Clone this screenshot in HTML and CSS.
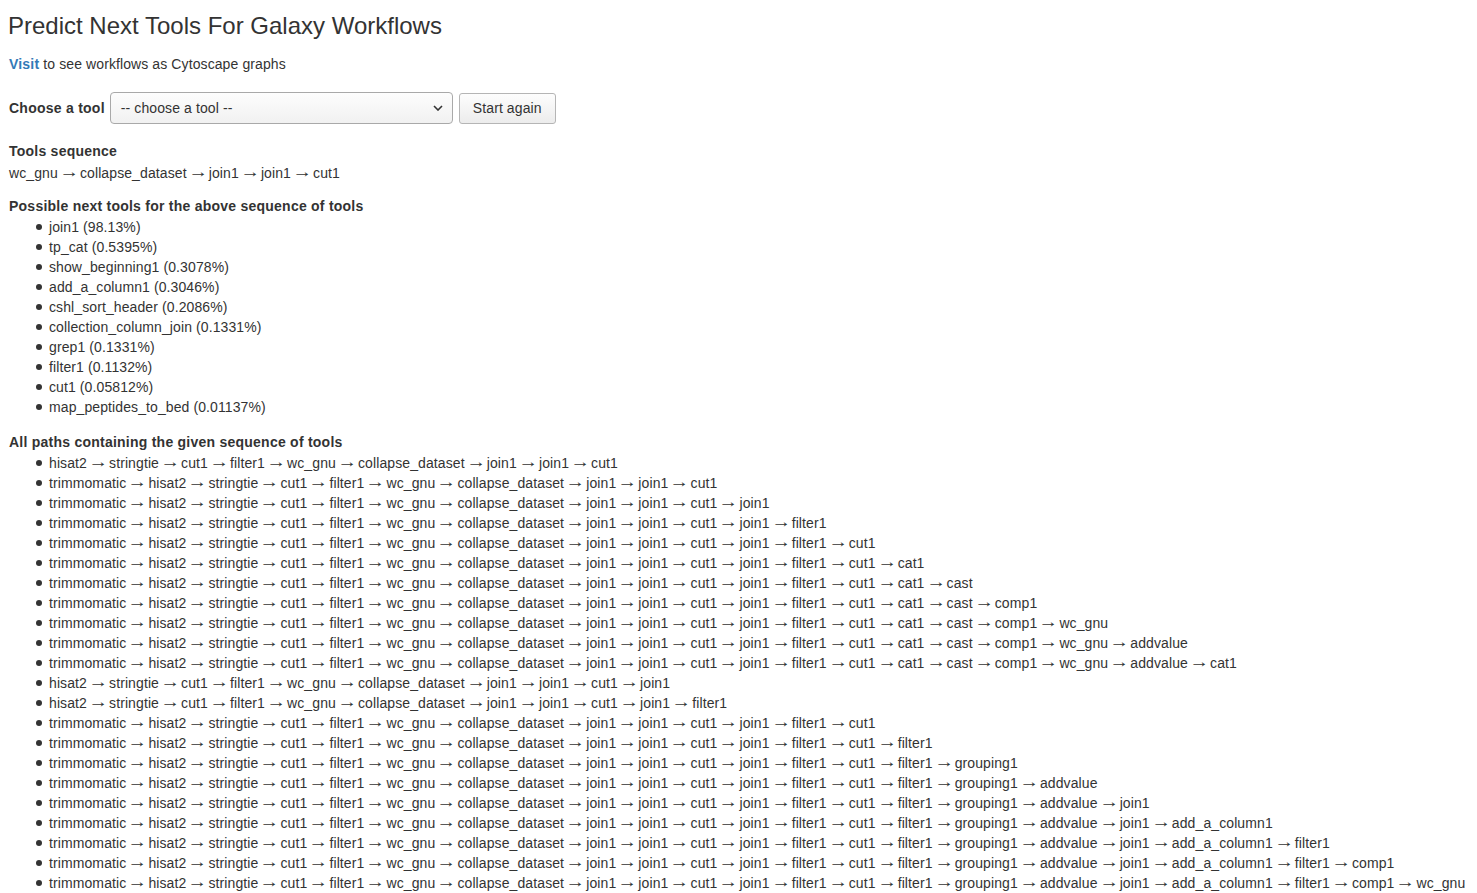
FILE: index.html
```html
<!DOCTYPE html>
<html>
<head>
<meta charset="utf-8">
<title>Predict Next Tools For Galaxy Workflows</title>
<link rel="stylesheet" href="styles.css">
</head>
<body>
<div class="page">
  <h1 class="title">Predict Next Tools For Galaxy Workflows</h1>
  <p class="intro"><a class="link" href="#">Visit</a> to see workflows as Cytoscape graphs</p>
  <div class="chooser">
    <label class="chooser-label">Choose a tool</label>
    <div class="select">
      <span class="select-text">-- choose a tool --</span>
      <svg class="select-caret" width="10" height="6" viewBox="0 0 10 6"><path d="M1 1 L5 5 L9 1" fill="none" stroke="#333" stroke-width="1.6"/></svg>
    </div>
    <button class="btn">Start again</button>
  </div>

  <div class="section section-seq">
    <div class="heading">Tools sequence</div>
    <div class="line">wc_gnu <span class="ar">→</span> collapse_dataset <span class="ar">→</span> join1 <span class="ar">→</span> join1 <span class="ar">→</span> cut1</div>
  </div>

  <div class="section">
    <div class="heading heading-list">Possible next tools for the above sequence of tools</div>
    <ul class="list">
      <li>join1 (98.13%)</li>
      <li>tp_cat (0.5395%)</li>
      <li>show_beginning1 (0.3078%)</li>
      <li>add_a_column1 (0.3046%)</li>
      <li>cshl_sort_header (0.2086%)</li>
      <li>collection_column_join (0.1331%)</li>
      <li>grep1 (0.1331%)</li>
      <li>filter1 (0.1132%)</li>
      <li>cut1 (0.05812%)</li>
      <li>map_peptides_to_bed (0.01137%)</li>
    </ul>
  </div>

  <div class="section">
    <div class="heading heading-list">All paths containing the given sequence of tools</div>
    <ul class="list">
      <li>hisat2 <span class="ar">→</span> stringtie <span class="ar">→</span> cut1 <span class="ar">→</span> filter1 <span class="ar">→</span> wc_gnu <span class="ar">→</span> collapse_dataset <span class="ar">→</span> join1 <span class="ar">→</span> join1 <span class="ar">→</span> cut1</li>
      <li>trimmomatic <span class="ar">→</span> hisat2 <span class="ar">→</span> stringtie <span class="ar">→</span> cut1 <span class="ar">→</span> filter1 <span class="ar">→</span> wc_gnu <span class="ar">→</span> collapse_dataset <span class="ar">→</span> join1 <span class="ar">→</span> join1 <span class="ar">→</span> cut1</li>
      <li>trimmomatic <span class="ar">→</span> hisat2 <span class="ar">→</span> stringtie <span class="ar">→</span> cut1 <span class="ar">→</span> filter1 <span class="ar">→</span> wc_gnu <span class="ar">→</span> collapse_dataset <span class="ar">→</span> join1 <span class="ar">→</span> join1 <span class="ar">→</span> cut1 <span class="ar">→</span> join1</li>
      <li>trimmomatic <span class="ar">→</span> hisat2 <span class="ar">→</span> stringtie <span class="ar">→</span> cut1 <span class="ar">→</span> filter1 <span class="ar">→</span> wc_gnu <span class="ar">→</span> collapse_dataset <span class="ar">→</span> join1 <span class="ar">→</span> join1 <span class="ar">→</span> cut1 <span class="ar">→</span> join1 <span class="ar">→</span> filter1</li>
      <li>trimmomatic <span class="ar">→</span> hisat2 <span class="ar">→</span> stringtie <span class="ar">→</span> cut1 <span class="ar">→</span> filter1 <span class="ar">→</span> wc_gnu <span class="ar">→</span> collapse_dataset <span class="ar">→</span> join1 <span class="ar">→</span> join1 <span class="ar">→</span> cut1 <span class="ar">→</span> join1 <span class="ar">→</span> filter1 <span class="ar">→</span> cut1</li>
      <li>trimmomatic <span class="ar">→</span> hisat2 <span class="ar">→</span> stringtie <span class="ar">→</span> cut1 <span class="ar">→</span> filter1 <span class="ar">→</span> wc_gnu <span class="ar">→</span> collapse_dataset <span class="ar">→</span> join1 <span class="ar">→</span> join1 <span class="ar">→</span> cut1 <span class="ar">→</span> join1 <span class="ar">→</span> filter1 <span class="ar">→</span> cut1 <span class="ar">→</span> cat1</li>
      <li>trimmomatic <span class="ar">→</span> hisat2 <span class="ar">→</span> stringtie <span class="ar">→</span> cut1 <span class="ar">→</span> filter1 <span class="ar">→</span> wc_gnu <span class="ar">→</span> collapse_dataset <span class="ar">→</span> join1 <span class="ar">→</span> join1 <span class="ar">→</span> cut1 <span class="ar">→</span> join1 <span class="ar">→</span> filter1 <span class="ar">→</span> cut1 <span class="ar">→</span> cat1 <span class="ar">→</span> cast</li>
      <li>trimmomatic <span class="ar">→</span> hisat2 <span class="ar">→</span> stringtie <span class="ar">→</span> cut1 <span class="ar">→</span> filter1 <span class="ar">→</span> wc_gnu <span class="ar">→</span> collapse_dataset <span class="ar">→</span> join1 <span class="ar">→</span> join1 <span class="ar">→</span> cut1 <span class="ar">→</span> join1 <span class="ar">→</span> filter1 <span class="ar">→</span> cut1 <span class="ar">→</span> cat1 <span class="ar">→</span> cast <span class="ar">→</span> comp1</li>
      <li>trimmomatic <span class="ar">→</span> hisat2 <span class="ar">→</span> stringtie <span class="ar">→</span> cut1 <span class="ar">→</span> filter1 <span class="ar">→</span> wc_gnu <span class="ar">→</span> collapse_dataset <span class="ar">→</span> join1 <span class="ar">→</span> join1 <span class="ar">→</span> cut1 <span class="ar">→</span> join1 <span class="ar">→</span> filter1 <span class="ar">→</span> cut1 <span class="ar">→</span> cat1 <span class="ar">→</span> cast <span class="ar">→</span> comp1 <span class="ar">→</span> wc_gnu</li>
      <li>trimmomatic <span class="ar">→</span> hisat2 <span class="ar">→</span> stringtie <span class="ar">→</span> cut1 <span class="ar">→</span> filter1 <span class="ar">→</span> wc_gnu <span class="ar">→</span> collapse_dataset <span class="ar">→</span> join1 <span class="ar">→</span> join1 <span class="ar">→</span> cut1 <span class="ar">→</span> join1 <span class="ar">→</span> filter1 <span class="ar">→</span> cut1 <span class="ar">→</span> cat1 <span class="ar">→</span> cast <span class="ar">→</span> comp1 <span class="ar">→</span> wc_gnu <span class="ar">→</span> addvalue</li>
      <li>trimmomatic <span class="ar">→</span> hisat2 <span class="ar">→</span> stringtie <span class="ar">→</span> cut1 <span class="ar">→</span> filter1 <span class="ar">→</span> wc_gnu <span class="ar">→</span> collapse_dataset <span class="ar">→</span> join1 <span class="ar">→</span> join1 <span class="ar">→</span> cut1 <span class="ar">→</span> join1 <span class="ar">→</span> filter1 <span class="ar">→</span> cut1 <span class="ar">→</span> cat1 <span class="ar">→</span> cast <span class="ar">→</span> comp1 <span class="ar">→</span> wc_gnu <span class="ar">→</span> addvalue <span class="ar">→</span> cat1</li>
      <li>hisat2 <span class="ar">→</span> stringtie <span class="ar">→</span> cut1 <span class="ar">→</span> filter1 <span class="ar">→</span> wc_gnu <span class="ar">→</span> collapse_dataset <span class="ar">→</span> join1 <span class="ar">→</span> join1 <span class="ar">→</span> cut1 <span class="ar">→</span> join1</li>
      <li>hisat2 <span class="ar">→</span> stringtie <span class="ar">→</span> cut1 <span class="ar">→</span> filter1 <span class="ar">→</span> wc_gnu <span class="ar">→</span> collapse_dataset <span class="ar">→</span> join1 <span class="ar">→</span> join1 <span class="ar">→</span> cut1 <span class="ar">→</span> join1 <span class="ar">→</span> filter1</li>
      <li>trimmomatic <span class="ar">→</span> hisat2 <span class="ar">→</span> stringtie <span class="ar">→</span> cut1 <span class="ar">→</span> filter1 <span class="ar">→</span> wc_gnu <span class="ar">→</span> collapse_dataset <span class="ar">→</span> join1 <span class="ar">→</span> join1 <span class="ar">→</span> cut1 <span class="ar">→</span> join1 <span class="ar">→</span> filter1 <span class="ar">→</span> cut1</li>
      <li>trimmomatic <span class="ar">→</span> hisat2 <span class="ar">→</span> stringtie <span class="ar">→</span> cut1 <span class="ar">→</span> filter1 <span class="ar">→</span> wc_gnu <span class="ar">→</span> collapse_dataset <span class="ar">→</span> join1 <span class="ar">→</span> join1 <span class="ar">→</span> cut1 <span class="ar">→</span> join1 <span class="ar">→</span> filter1 <span class="ar">→</span> cut1 <span class="ar">→</span> filter1</li>
      <li>trimmomatic <span class="ar">→</span> hisat2 <span class="ar">→</span> stringtie <span class="ar">→</span> cut1 <span class="ar">→</span> filter1 <span class="ar">→</span> wc_gnu <span class="ar">→</span> collapse_dataset <span class="ar">→</span> join1 <span class="ar">→</span> join1 <span class="ar">→</span> cut1 <span class="ar">→</span> join1 <span class="ar">→</span> filter1 <span class="ar">→</span> cut1 <span class="ar">→</span> filter1 <span class="ar">→</span> grouping1</li>
      <li>trimmomatic <span class="ar">→</span> hisat2 <span class="ar">→</span> stringtie <span class="ar">→</span> cut1 <span class="ar">→</span> filter1 <span class="ar">→</span> wc_gnu <span class="ar">→</span> collapse_dataset <span class="ar">→</span> join1 <span class="ar">→</span> join1 <span class="ar">→</span> cut1 <span class="ar">→</span> join1 <span class="ar">→</span> filter1 <span class="ar">→</span> cut1 <span class="ar">→</span> filter1 <span class="ar">→</span> grouping1 <span class="ar">→</span> addvalue</li>
      <li>trimmomatic <span class="ar">→</span> hisat2 <span class="ar">→</span> stringtie <span class="ar">→</span> cut1 <span class="ar">→</span> filter1 <span class="ar">→</span> wc_gnu <span class="ar">→</span> collapse_dataset <span class="ar">→</span> join1 <span class="ar">→</span> join1 <span class="ar">→</span> cut1 <span class="ar">→</span> join1 <span class="ar">→</span> filter1 <span class="ar">→</span> cut1 <span class="ar">→</span> filter1 <span class="ar">→</span> grouping1 <span class="ar">→</span> addvalue <span class="ar">→</span> join1</li>
      <li>trimmomatic <span class="ar">→</span> hisat2 <span class="ar">→</span> stringtie <span class="ar">→</span> cut1 <span class="ar">→</span> filter1 <span class="ar">→</span> wc_gnu <span class="ar">→</span> collapse_dataset <span class="ar">→</span> join1 <span class="ar">→</span> join1 <span class="ar">→</span> cut1 <span class="ar">→</span> join1 <span class="ar">→</span> filter1 <span class="ar">→</span> cut1 <span class="ar">→</span> filter1 <span class="ar">→</span> grouping1 <span class="ar">→</span> addvalue <span class="ar">→</span> join1 <span class="ar">→</span> add_a_column1</li>
      <li>trimmomatic <span class="ar">→</span> hisat2 <span class="ar">→</span> stringtie <span class="ar">→</span> cut1 <span class="ar">→</span> filter1 <span class="ar">→</span> wc_gnu <span class="ar">→</span> collapse_dataset <span class="ar">→</span> join1 <span class="ar">→</span> join1 <span class="ar">→</span> cut1 <span class="ar">→</span> join1 <span class="ar">→</span> filter1 <span class="ar">→</span> cut1 <span class="ar">→</span> filter1 <span class="ar">→</span> grouping1 <span class="ar">→</span> addvalue <span class="ar">→</span> join1 <span class="ar">→</span> add_a_column1 <span class="ar">→</span> filter1</li>
      <li>trimmomatic <span class="ar">→</span> hisat2 <span class="ar">→</span> stringtie <span class="ar">→</span> cut1 <span class="ar">→</span> filter1 <span class="ar">→</span> wc_gnu <span class="ar">→</span> collapse_dataset <span class="ar">→</span> join1 <span class="ar">→</span> join1 <span class="ar">→</span> cut1 <span class="ar">→</span> join1 <span class="ar">→</span> filter1 <span class="ar">→</span> cut1 <span class="ar">→</span> filter1 <span class="ar">→</span> grouping1 <span class="ar">→</span> addvalue <span class="ar">→</span> join1 <span class="ar">→</span> add_a_column1 <span class="ar">→</span> filter1 <span class="ar">→</span> comp1</li>
      <li>trimmomatic <span class="ar">→</span> hisat2 <span class="ar">→</span> stringtie <span class="ar">→</span> cut1 <span class="ar">→</span> filter1 <span class="ar">→</span> wc_gnu <span class="ar">→</span> collapse_dataset <span class="ar">→</span> join1 <span class="ar">→</span> join1 <span class="ar">→</span> cut1 <span class="ar">→</span> join1 <span class="ar">→</span> filter1 <span class="ar">→</span> cut1 <span class="ar">→</span> filter1 <span class="ar">→</span> grouping1 <span class="ar">→</span> addvalue <span class="ar">→</span> join1 <span class="ar">→</span> add_a_column1 <span class="ar">→</span> filter1 <span class="ar">→</span> comp1 <span class="ar">→</span> wc_gnu</li>
    </ul>
  </div>
</div>
</body>
</html>
```
FILE: styles.css
```css
* { box-sizing: border-box; }
html, body { margin: 0; padding: 0; background: #fff; }
body {
  font-family: "Liberation Sans", Arial, sans-serif;
  font-size: 14px;
  line-height: 20px;
  color: #333;
  letter-spacing: 0.1px;
}
.page { padding: 0 9px; }
.title {
  font-size: 24px;
  font-weight: 500;
  line-height: 26px;
  letter-spacing: 0;
  margin: 13px 0 0 -1px;
}
.intro { margin: 15px 0 18px; }
.link { color: #337ab7; font-weight: bold; text-decoration: none; letter-spacing: 0.2px; }
.chooser {
  display: flex;
  align-items: center;
  margin-bottom: 17px;
}
.chooser-label { font-weight: bold; letter-spacing: 0.25px; margin-right: 5px; }
.select {
  width: 343px;
  height: 32px;
  border: 1px solid #a9a9a9;
  border-radius: 4px;
  background: linear-gradient(#fdfdfd, #f1f1f1);
  display: flex;
  align-items: center;
  justify-content: space-between;
  padding: 0 9px 0 10px;
}
.select-caret { display: block; }
.btn {
  margin-left: 6px;
  height: 31px;
  padding: 0 13px;
  font: inherit;
  letter-spacing: 0.1px;
  color: #333;
  border: 1px solid #b5b5b5;
  border-radius: 3px;
  background: linear-gradient(#fdfdfd, #ececec);
}
.section { margin-bottom: 15px; }
.section-seq { margin-bottom: 13px; }
.heading { font-weight: bold; letter-spacing: 0.24px; margin-bottom: 2px; }
.heading-list { margin-bottom: 1px; }
.line { white-space: nowrap; }
.ar {
  display: inline-block;
  transform: translateY(-1.5px) scale(1.4, 1.15);
}
.list { margin: 0; padding: 0 0 0 27px; list-style: none; }
.list li { white-space: nowrap; }
.list li::before {
  content: "";
  display: inline-block;
  width: 6px;
  height: 6px;
  border-radius: 50%;
  background: #333;
  margin-right: 7px;
  vertical-align: 2px;
}
```
